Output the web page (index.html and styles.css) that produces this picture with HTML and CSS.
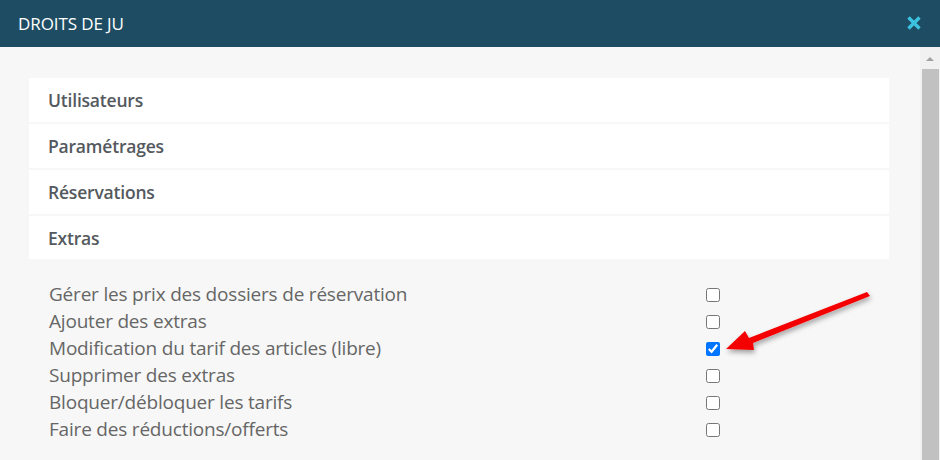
FILE: index.html
```html
<!DOCTYPE html>
<html lang="fr">
<head>
  <meta charset="UTF-8" />
  <title>Droits de JU</title>
  <link rel="stylesheet" href="styles.css">
</head>
<body>
  <div class="modal">
    <div class="modal-header">
      <h1>DROITS DE JU</h1>
      <svg class="close" width="16" height="14" viewBox="0 0 16 14">
        <path d="M2.5 1.5 L13.5 12.5 M13.5 1.5 L2.5 12.5" stroke="#3cc3e2" stroke-width="3.4" stroke-linecap="butt"/>
      </svg>
    </div>
    <div class="modal-main">
      <div class="modal-body">
        <div class="panel">Utilisateurs</div>
        <div class="panel">Paramétrages</div>
        <div class="panel">Réservations</div>
        <div class="panel">Extras</div>

        <div class="rights">
          <label class="right"><span>Gérer les prix des dossiers de réservation</span><input type="checkbox"></label>
          <label class="right"><span>Ajouter des extras</span><input type="checkbox"></label>
          <label class="right"><span>Modification du tarif des articles (libre)</span><input type="checkbox" checked></label>
          <label class="right"><span>Supprimer des extras</span><input type="checkbox"></label>
          <label class="right"><span>Bloquer/débloquer les tarifs</span><input type="checkbox"></label>
          <label class="right"><span>Faire des réductions/offerts</span><input type="checkbox"></label>
        </div>
      </div>
      <div class="scrollbar">
        <div class="scroll-up"></div>
        <div class="scroll-thumb"></div>
      </div>
    </div>

    <svg class="arrow" width="940" height="460" viewBox="0 0 940 460">
      <defs>
        <filter id="shadow" x="-20%" y="-20%" width="140%" height="140%">
          <feDropShadow dx="1" dy="3" stdDeviation="2.5" flood-color="#000" flood-opacity="0.35"/>
        </filter>
      </defs>
      <polygon filter="url(#shadow)" fill="#f40000"
        points="726,349 745,331 749,338 867,292 870,296 753,343 754,350"/>
    </svg>
  </div>
</body>
</html>
```

FILE: styles.css
```css
* { box-sizing: border-box; }
html, body { margin: 0; padding: 0; }
body { font-family: 'Open Sans', 'Noto Sans', sans-serif; background: #f7f7f7; width: 940px; height: 460px; overflow: hidden; }

.modal { position: relative; width: 940px; height: 460px; background: #f7f7f7; }
.modal-header { height: 47px; background: #1e4d63; display: flex; align-items: center; justify-content: space-between; padding: 0 18px 0 18px; }
.modal-header h1 { margin: 0; font-size: 17px; font-weight: 400; color: #fff; letter-spacing: -0.1px; }
.close { display: block; margin-top: -1px; }

.modal-main { display: flex; height: 413px; }
.modal-body { flex: 1; padding: 31px 31px 0 29px; }

.panel { background: #fff; height: 44px; margin-bottom: 2px; padding: 0 19px; display: flex; align-items: center; font-size: 17.5px; font-weight: 600; color: #54595e; letter-spacing: -0.2px; }
.panel:nth-child(4) { height: 43px; margin-bottom: 0; }

.rights { padding: 22px 0 0 20px; }
.right { display: grid; grid-template-columns: 657px 16px; align-items: center; height: 27px; font-size: 19px; color: #666; letter-spacing: -0.2px; }
.right span { margin-top: -2px; }
.right input { margin: 0; width: 14px; height: 14px; }

.scrollbar { width: 20px; background: #f1f1f1; display: flex; flex-direction: column; align-items: center; }
.scroll-up { width: 0; height: 0; margin: 10px 0 0; border-left: 4px solid transparent; border-right: 4px solid transparent; border-bottom: 4px solid #a3a3a3; }
.scroll-thumb { width: 17px; flex: 1; margin-top: 8px; margin-left: 1px; background: #c1c1c1; }

.arrow { position: absolute; left: 0; top: 0; pointer-events: none; }
```
